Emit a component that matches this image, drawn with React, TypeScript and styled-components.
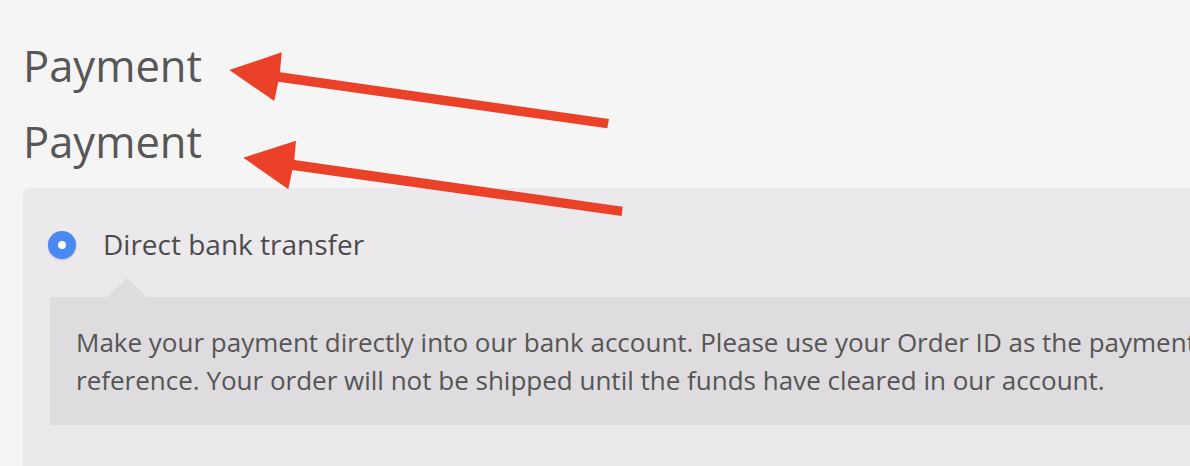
import React from "react";
import styled, { createGlobalStyle } from "styled-components";

const GlobalStyle = createGlobalStyle`
  html, body {
    margin: 0;
    padding: 0;
    background: #f5f5f5;
    overflow: hidden;
  }
  body {
    font-family: "Open Sans", "Noto Sans", sans-serif;
  }
`;

const Page = styled.div`
  position: relative;
  width: 1320px;
  height: 466px;
  padding: 36px 0 0 23px;
  box-sizing: border-box;
  overflow: hidden;
`;

const Heading = styled.h2`
  margin: 0 0 16px;
  font-size: 43.5px;
  line-height: 60px;
  font-weight: 400;
  color: #575757;
`;

const Panel = styled.section`
  background: #ebe9eb;
  border-radius: 8px;
  padding: 43px 25px 60px 25px;
  min-height: 300px;
`;

const MethodRow = styled.label`
  display: flex;
  align-items: center;
  gap: 27px;
  height: 28px;
`;

const Radio = styled.span`
  flex: none;
  width: 28px;
  height: 28px;
  border-radius: 50%;
  background: #4a89f3;
  box-shadow: 0 1px 2px rgba(0, 0, 0, 0.18);
  display: flex;
  align-items: center;
  justify-content: center;

  &::after {
    content: "";
    width: 8px;
    height: 8px;
    border-radius: 50%;
    background: #fff;
  }
`;

const MethodName = styled.span`
  font-size: 28px;
  line-height: 40px;
  color: #4d4a4f;
  margin-top: -2px;
`;

const Description = styled.div`
  position: relative;
  margin: 38px 0 0 2px;
  background: #dedcde;
  border-radius: 3px;
  padding: 26px 26px;
  font-size: 26px;
  line-height: 38px;
  color: #555;

  &::before {
    content: "";
    position: absolute;
    left: 57px;
    top: -19px;
    border-left: 20px solid transparent;
    border-right: 20px solid transparent;
    border-bottom: 19px solid #dedcde;
  }
`;

const Overlay = styled.svg`
  position: absolute;
  left: 0;
  top: 0;
  width: 1190px;
  height: 466px;
  pointer-events: none;
`;

export default function App() {
  return (
    <>
      <GlobalStyle />
      <Page>
        <Heading>Payment</Heading>
        <Heading>Payment</Heading>
        <Panel>
          <MethodRow>
            <Radio />
            <MethodName>Direct bank transfer</MethodName>
          </MethodRow>
          <Description>
            Make your payment directly into our bank account. Please use your
            Order ID as the payment reference. Your order will not be shipped
            until the funds have cleared in our account.
          </Description>
        </Panel>
        <Overlay viewBox="0 0 1190 466">
          <polygon
            fill="#ea4128"
            points="229.3,70 281.7,52.3 280,72.3 609,119 607.3,128.3 278.3,81.7 274.3,101"
          />
          <polygon
            fill="#ea4128"
            points="243.3,157.7 296,140.7 294.3,160 622.7,206.7 621.7,216 292.3,170 288.3,189.3"
          />
        </Overlay>
      </Page>
    </>
  );
}
